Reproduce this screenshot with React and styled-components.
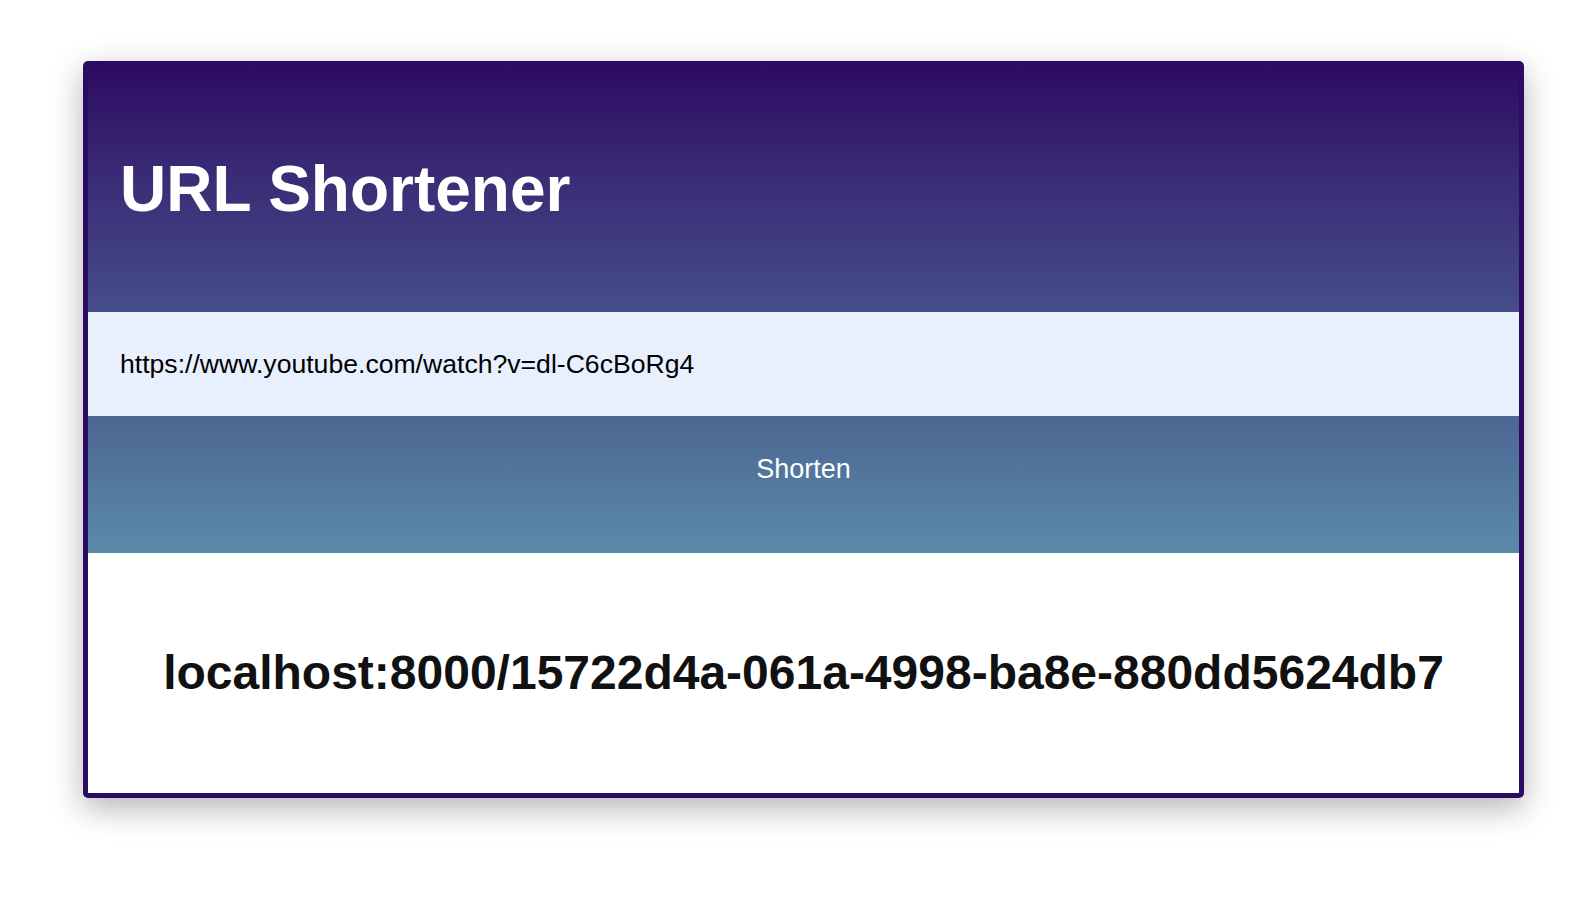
import React from "react";
import styled, { createGlobalStyle } from "styled-components";

const Global = createGlobalStyle`
  html, body { margin: 0; padding: 0; background: #ffffff; }
  body { font-family: "Liberation Sans", Arial, sans-serif; }
  * { box-sizing: border-box; }
`;

const Page = styled.div`
  padding: 61px 0 0 83px;
  height: 900px;
`;

const Card = styled.div`
  width: 1441px;
  border: 5px solid #2c0c62;
  border-radius: 5px;
  overflow: hidden;
  box-shadow: 0 10px 32px rgba(0, 0, 0, 0.3);
  display: flex;
  flex-direction: column;
  background: #ffffff;
`;

const Header = styled.header`
  height: 246px;
  display: flex;
  align-items: center;
  padding: 0 32px;
  background: linear-gradient(180deg, #2d0c63 0%, #3a2c76 45%, #464d8a 100%);
`;

const Title = styled.h1`
  margin: 0;
  font-size: 64px;
  line-height: 1;
  font-weight: 700;
  color: #ffffff;
`;

const UrlInput = styled.input`
  display: block;
  width: 100%;
  height: 104px;
  border: none;
  outline: none;
  margin: 0;
  padding: 0 31px 0 32px;
  background: #e8f0fe;
  color: #000000;
  font-family: "Liberation Sans", Arial, sans-serif;
  font-size: 26.6px;
  line-height: 1;
`;

const ShortenButton = styled.button`
  width: 100%;
  height: 137px;
  margin: 0;
  border: none;
  padding: 40px 0 0;
  background: linear-gradient(180deg, #4d6692 0%, #5a8bab 100%);
  color: #ffffff;
  font-family: "Liberation Sans", Arial, sans-serif;
  font-size: 27px;
  line-height: 1;
  cursor: pointer;
  display: flex;
  justify-content: center;
  align-items: flex-start;
`;

const Result = styled.section`
  height: 240px;
  display: flex;
  align-items: center;
  justify-content: center;
`;

const ShortUrl = styled.h2`
  margin: 0;
  font-size: 48px;
  line-height: 1;
  font-weight: 700;
  color: #111111;
`;

export default function App() {
  return (
    <>
      <Global />
      <Page>
        <Card>
          <Header>
            <Title>URL Shortener</Title>
          </Header>
          <UrlInput
            type="text"
            defaultValue="https://www.youtube.com/watch?v=dl-C6cBoRg4"
          />
          <ShortenButton type="button">Shorten</ShortenButton>
          <Result>
            <ShortUrl>localhost:8000/15722d4a-061a-4998-ba8e-880dd5624db7</ShortUrl>
          </Result>
        </Card>
      </Page>
    </>
  );
}
